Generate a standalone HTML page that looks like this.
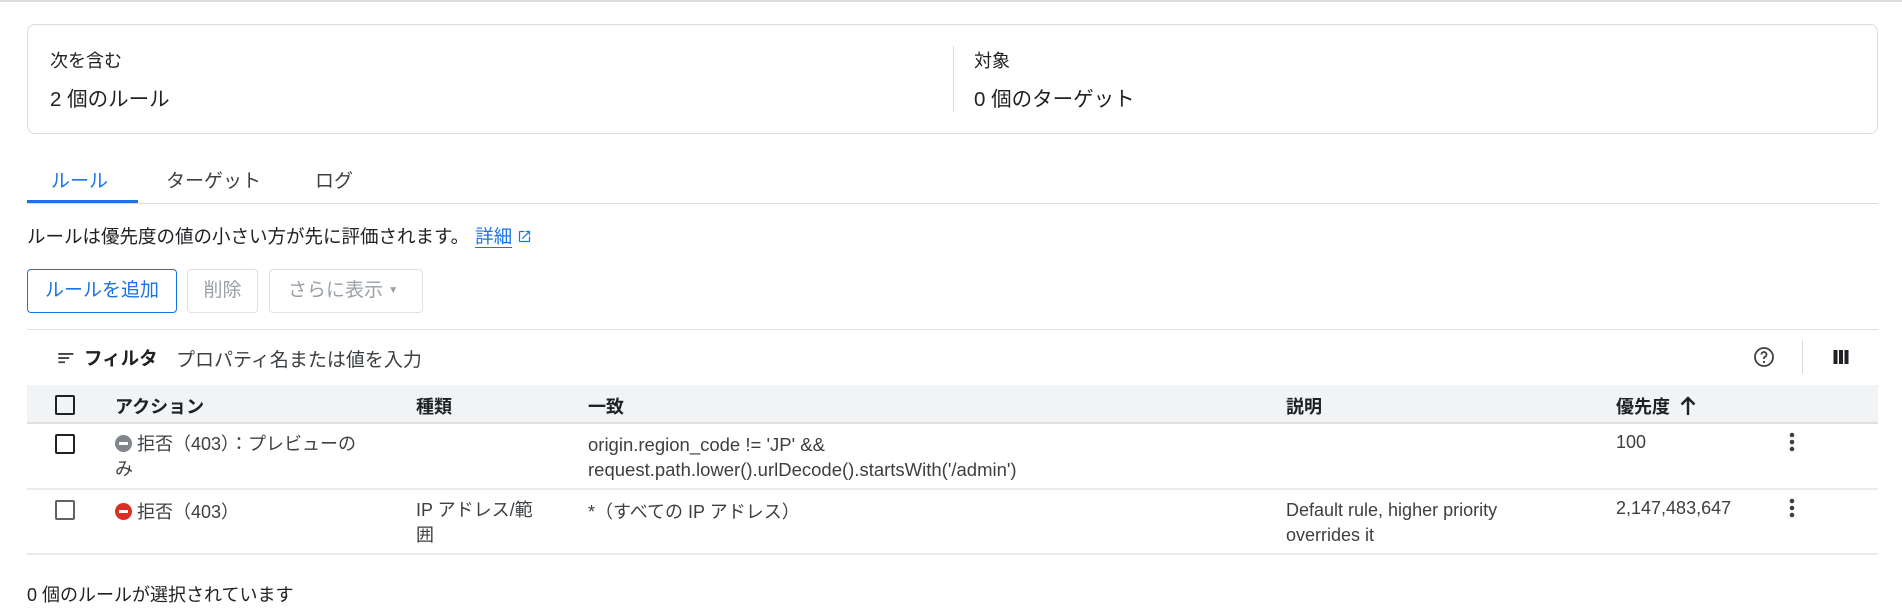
<!DOCTYPE html>
<html><head><meta charset="utf-8"><style>
*{box-sizing:border-box;margin:0;padding:0}
body{width:1902px;height:612px;background:#fff;font-family:"Liberation Sans","Noto Sans CJK JP",sans-serif;color:#202124;position:relative;overflow:hidden;font-size:18px}
.a{position:absolute;white-space:nowrap}
.g{color:#3c4043}
</style></head><body>
<div class="a" style="left:0;top:0;width:1902px;height:2px;background:#dadce0"></div>
<div class="a" style="left:27px;top:24px;width:1851px;height:110px;border:1px solid #dadce0;border-radius:8px"></div>
<div class="a" style="left:50px;top:47px;font-size:18px">次を含む</div>
<div class="a" style="left:50px;top:82px;font-size:20.5px">2 個のルール</div>
<div class="a" style="left:953px;top:46px;width:1px;height:66px;background:#dadce0"></div>
<div class="a" style="left:974px;top:47px;font-size:18px">対象</div>
<div class="a" style="left:974px;top:82px;font-size:20.5px">0 個のターゲット</div>

<div class="a" style="left:27px;top:203px;width:1851px;height:1px;background:#dadce0"></div>
<div class="a" style="left:27px;top:200px;width:111px;height:3px;background:#1a73e8"></div>
<div class="a" style="left:51px;top:166px;color:#1a73e8;font-size:19px">ルール</div>
<div class="a g" style="left:166px;top:166px;font-size:19px">ターゲット</div>
<div class="a g" style="left:315px;top:166px;font-size:19px">ログ</div>

<div class="a" style="left:27px;top:223px;font-size:18.5px">ルールは優先度の値の小さい方が先に評価されます。<span style="color:#1a73e8;border-bottom:1px solid #1a73e8;margin-left:6px">詳細</span> <svg width="15" height="15" viewBox="0 0 24 24" style="vertical-align:-1px"><path d="M19 19H5V5h7V3H5a2 2 0 0 0-2 2v14a2 2 0 0 0 2 2h14a2 2 0 0 0 2-2v-7h-2v7zM14 3v2h3.59l-9.83 9.83 1.41 1.41L19 6.41V10h2V3h-7z" fill="#1a73e8"/></svg></div>

<div class="a" style="left:27px;top:269px;width:150px;height:44px;border:1px solid #1a73e8;border-radius:4px;color:#1a73e8;text-align:center;line-height:42px;font-size:19px">ルールを追加</div>
<div class="a" style="left:187px;top:269px;width:71px;height:44px;border:1px solid #e0e0e0;border-radius:4px;color:#9aa0a6;text-align:center;line-height:42px;font-size:19px">削除</div>
<div class="a" style="left:269px;top:269px;width:154px;height:44px;border:1px solid #e0e0e0;border-radius:4px;color:#9aa0a6;line-height:42px;padding-left:18px;font-size:19px">さらに表示 <span style="font-size:10px;vertical-align:3px">▼</span></div>

<div class="a" style="left:27px;top:329px;width:1851px;height:1px;background:#e0e0e0"></div>
<svg class="a" style="left:55px;top:348px" width="20" height="20" viewBox="0 0 24 24"><path d="M3 6h18v2.2H3zM3 11h13v2.2H3zM3 16h8v2.2H3z" fill="#3c4043" transform="translate(1 0)"/></svg>
<div class="a" style="left:84px;top:345px;font-weight:bold;font-size:18.5px">フィルタ</div>
<div class="a g" style="left:176px;top:345px;font-size:19px">プロパティ名または値を入力</div>
<svg class="a" style="left:1752px;top:345px" width="24" height="24" viewBox="0 0 24 24"><circle cx="12" cy="12" r="9" fill="none" stroke="#3c4043" stroke-width="1.8"/><path d="M9.5 9.5a2.5 2.5 0 1 1 3.5 2.3c-.7.3-1 .8-1 1.5v.7" fill="none" stroke="#3c4043" stroke-width="1.8"/><circle cx="12" cy="17" r="1.1" fill="#3c4043"/></svg>
<div class="a" style="left:1802px;top:340px;width:1px;height:34px;background:#dadce0"></div>
<svg class="a" style="left:1832px;top:348px" width="18" height="18" viewBox="0 0 18 18"><path d="M1.5 2h4v14h-4zM7 2h4v14H7zM12.5 2h4v14h-4z" fill="#202124"/></svg>

<div class="a" style="left:27px;top:385px;width:1851px;height:39px;background:#f1f3f4;border-bottom:2px solid #e0e0e0"></div>
<div class="a" style="left:55px;top:395px;width:20px;height:20px;border:2px solid #202124;border-radius:2px"></div>
<div class="a" style="left:115px;top:393px;font-weight:bold">アクション</div>
<div class="a" style="left:416px;top:393px;font-weight:bold">種類</div>
<div class="a" style="left:588px;top:393px;font-weight:bold">一致</div>
<div class="a" style="left:1286px;top:393px;font-weight:bold">説明</div>
<div class="a" style="left:1616px;top:393px;font-weight:bold">優先度 <svg width="18" height="20" viewBox="0 0 18 20" style="vertical-align:-3px;margin-left:4px"><path d="M9 2v17M2.5 8.5L9 2l6.5 6.5" fill="none" stroke="#202124" stroke-width="2.4"/></svg></div>

<div class="a" style="left:55px;top:434px;width:20px;height:20px;border:2px solid #202124;border-radius:2px"></div>
<div class="a g" style="left:115px;top:432px;line-height:25px;white-space:normal;width:270px"><span style="display:inline-block;width:17px;height:17px;border-radius:50%;background:#80868b;vertical-align:-2px;position:relative"><span style="position:absolute;left:4px;top:7px;width:9px;height:3px;background:#fff"></span></span> 拒否（403）：プレビューの<br>み</div>
<div class="a g" style="left:588px;top:432px;line-height:25px;font-size:18.5px">origin.region_code != 'JP' &amp;&amp;<br>request.path.lower().urlDecode().startsWith('/admin')</div>
<div class="a g" style="left:1616px;top:432px">100</div>
<svg class="a" style="left:1782px;top:430px" width="20" height="24" viewBox="0 0 20 24"><circle cx="10" cy="5" r="2.3" fill="#3c4043"/><circle cx="10" cy="12" r="2.3" fill="#3c4043"/><circle cx="10" cy="19" r="2.3" fill="#3c4043"/></svg>
<div class="a" style="left:27px;top:488px;width:1851px;height:2px;background:#e8eaed"></div>

<div class="a" style="left:55px;top:500px;width:20px;height:20px;border:2px solid #5f6368;border-radius:2px"></div>
<div class="a g" style="left:115px;top:498px"><span style="display:inline-block;width:17px;height:17px;border-radius:50%;background:#d93025;vertical-align:-2px;position:relative"><span style="position:absolute;left:4px;top:7px;width:9px;height:3px;background:#fff"></span></span> 拒否（403）</div>
<div class="a g" style="left:416px;top:498px;line-height:25px">IP アドレス/範<br>囲</div>
<div class="a g" style="left:588px;top:498px">*（すべての IP アドレス）</div>
<div class="a g" style="left:1286px;top:498px;line-height:25px">Default rule, higher priority<br>overrides it</div>
<div class="a g" style="left:1616px;top:498px">2,147,483,647</div>
<svg class="a" style="left:1782px;top:496px" width="20" height="24" viewBox="0 0 20 24"><circle cx="10" cy="5" r="2.3" fill="#3c4043"/><circle cx="10" cy="12" r="2.3" fill="#3c4043"/><circle cx="10" cy="19" r="2.3" fill="#3c4043"/></svg>
<div class="a" style="left:27px;top:553px;width:1851px;height:2px;background:#e8eaed"></div>

<div class="a" style="left:27px;top:581px;font-size:18px">0 個のルールが選択されています</div>
</body></html>
